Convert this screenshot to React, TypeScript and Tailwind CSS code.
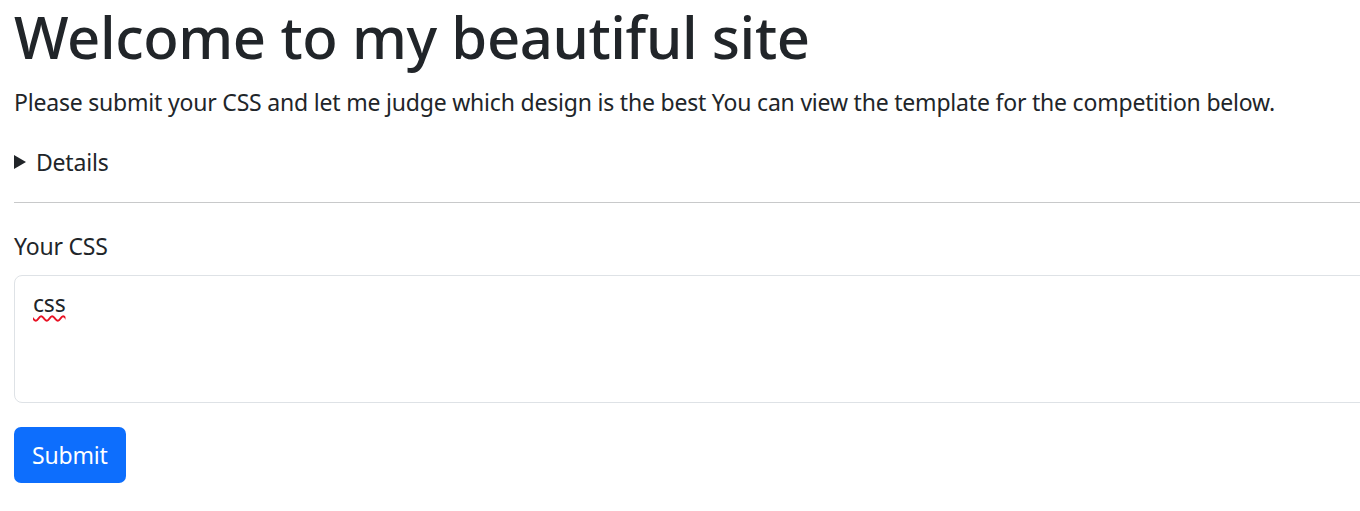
import React from "react";

export default function App() {
  return (
    <div className="w-[1360px] h-[511px] overflow-hidden bg-white text-[#212529] font-['Noto_Sans',sans-serif]">
      <div className="pl-[14px]">
        <h1 className="text-[58px] leading-[72px] font-medium m-0 pt-[1px] tracking-[-0.4px]">
          Welcome to my beautiful site
        </h1>
        <p className="mt-[11px] text-[23px] leading-[36px] tracking-[-0.2px]">
          Please submit your CSS and let me judge which design is the best You can view the template for the competition below.
        </p>
        <div className="mt-[24px] h-[36px] flex items-center text-[23px] leading-[36px] tracking-[-0.2px]">
          <svg width="12" height="14" viewBox="0 0 12 14" className="mr-[10px]">
            <path d="M0 0 L12 7 L0 14 Z" fill="#212529" />
          </svg>
          <span>Details</span>
        </div>
        <hr className="mt-[22px] w-[1400px] border-0 border-t border-[#c8c9ca]" />
        <div className="mt-[25px] text-[23px] leading-[36px] tracking-[-0.2px]">Your CSS</div>
        <div className="mt-[11px] w-[1400px] h-[128px] border border-[#dee2e6] rounded-[8px] px-[18px] py-[9px] text-[23px] leading-[36px] tracking-[-0.2px]">
          <span className="underline decoration-wavy decoration-[#e81123] decoration-[1.5px] underline-offset-[3px]">css</span>
        </div>
        <button className="mt-[24px] h-[56px] px-[18px] bg-[#0d6efd] text-white rounded-[7px] text-[23px] leading-[36px] tracking-[-0.2px]">
          Submit
        </button>
      </div>
    </div>
  );
}
